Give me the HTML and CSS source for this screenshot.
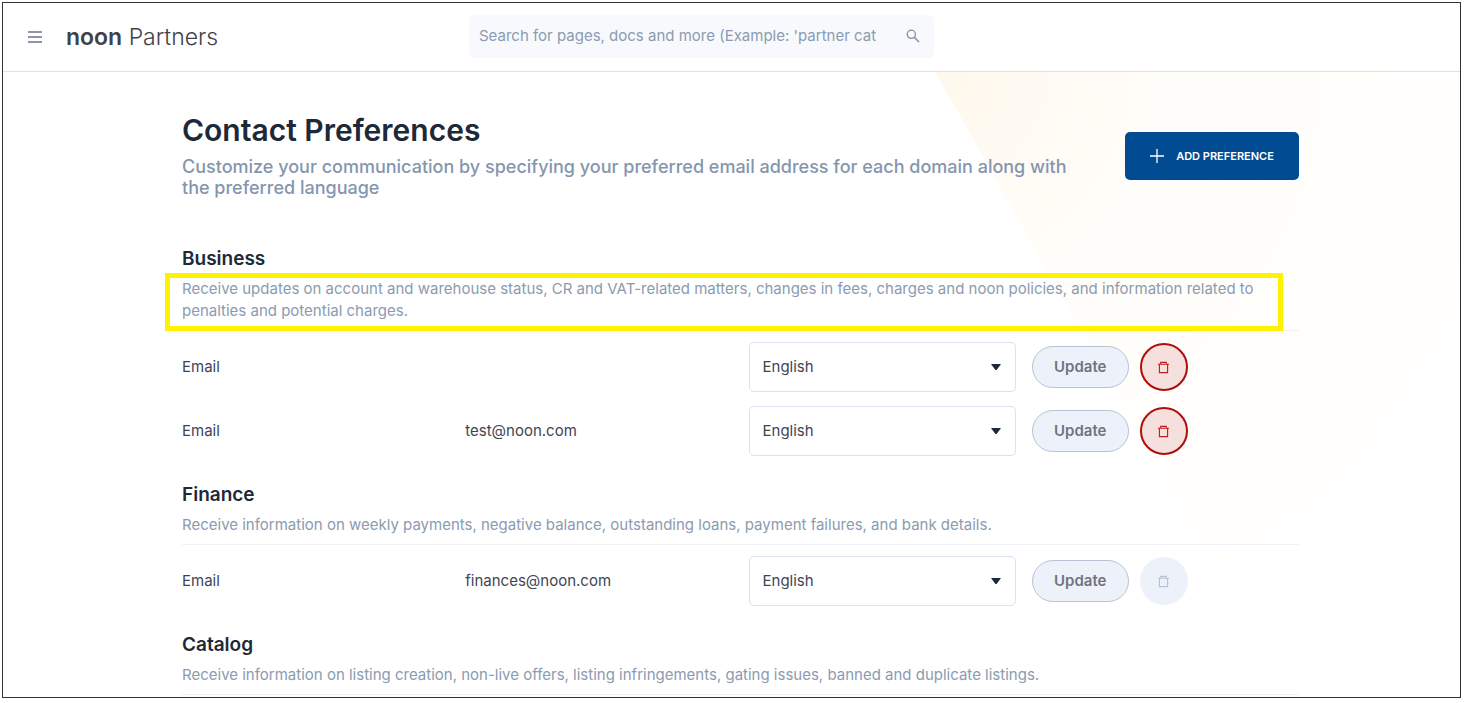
FILE: index.html
```html
<!DOCTYPE html>
<html lang="en">
<head>
<meta charset="utf-8">
<meta name="viewport" content="width=device-width, initial-scale=1">
<title>Contact Preferences</title>
<link rel="stylesheet" href="styles.css">
</head>
<body>
<svg class="sprite" aria-hidden="true">
  <symbol id="trash" viewBox="0 0 14 14"><path d="M1 3.5h12M4 3V1.5h6V3M2.6 4v8.5h8.8V4" fill="none" stroke="currentColor" stroke-width="1.2"/></symbol>
  <symbol id="caret" viewBox="0 0 10 6"><path d="M0 0h10L6 5.4Q5 6.4 4 5.4z" fill="currentColor"/></symbol>
</svg>
<div class="frame">
  <header class="topbar">
    <button class="menu" type="button" aria-label="Menu">
      <svg width="14" height="12" viewBox="0 0 14 12" aria-hidden="true"><path d="M0 1h14M0 6h14M0 11h14" stroke="currentColor" stroke-width="1.6"/></svg>
    </button>
    <a class="brand" href="#"><strong>noon</strong> Partners</a>
    <form class="search" role="search">
      <input class="search-input" type="text" aria-label="Search" placeholder="Search for pages, docs and more (Example: 'partner catalog')">
      <button class="search-button" type="button" aria-label="Search">
        <svg width="14" height="14" viewBox="0 0 14 14" aria-hidden="true"><g fill="none" stroke="currentColor"><circle cx="5.3" cy="5.3" r="4.1" stroke-width="1.3"/><path d="M8.3 8.3l4.7 4.7" stroke-width="1.6"/></g></svg>
      </button>
    </form>
  </header>
  <main class="page">
    <div class="intro">
      <div class="intro-text">
        <h1 class="title">Contact Preferences</h1>
        <p class="subtitle">Customize your communication by specifying your preferred email address for each domain along with the preferred language</p>
      </div>
      <button class="add" type="button">
        <svg width="14" height="14" viewBox="0 0 14 14" aria-hidden="true"><path d="M7 0v14M0 7h14" stroke="currentColor" stroke-width="1.3"/></svg>
        ADD PREFERENCE
      </button>
    </div>

    <section class="group">
      <h2 class="group-title">Business</h2>
      <p class="group-text highlighted">Receive updates on account and warehouse status, CR and VAT-related matters, changes in fees, charges and noon policies, and information related to penalties and potential charges.</p>
      <div class="rows">
        <div class="row">
          <label for="lang-1">Email</label>
          <span></span>
          <div class="select"><select id="lang-1"><option>English</option></select><svg class="caret" aria-hidden="true"><use href="#caret"/></svg></div>
          <div class="actions">
            <button class="update" type="button">Update</button>
            <button class="delete" type="button" aria-label="Delete"><svg class="trash" aria-hidden="true"><use href="#trash"/></svg></button>
          </div>
        </div>
        <div class="row">
          <label for="lang-2">Email</label>
          <span>test@noon.com</span>
          <div class="select"><select id="lang-2"><option>English</option></select><svg class="caret" aria-hidden="true"><use href="#caret"/></svg></div>
          <div class="actions">
            <button class="update" type="button">Update</button>
            <button class="delete" type="button" aria-label="Delete"><svg class="trash" aria-hidden="true"><use href="#trash"/></svg></button>
          </div>
        </div>
      </div>
    </section>

    <section class="group">
      <h2 class="group-title">Finance</h2>
      <p class="group-text">Receive information on weekly payments, negative balance, outstanding loans, payment failures, and bank details.</p>
      <div class="rows">
        <div class="row">
          <label for="lang-3">Email</label>
          <span>finances@noon.com</span>
          <div class="select"><select id="lang-3"><option>English</option></select><svg class="caret" aria-hidden="true"><use href="#caret"/></svg></div>
          <div class="actions">
            <button class="update" type="button">Update</button>
            <button class="delete" type="button" aria-label="Delete" disabled><svg class="trash" aria-hidden="true"><use href="#trash"/></svg></button>
          </div>
        </div>
      </div>
    </section>

    <section class="group">
      <h2 class="group-title">Catalog</h2>
      <p class="group-text">Receive information on listing creation, non-live offers, listing infringements, gating issues, banned and duplicate listings.</p>
    </section>
  </main>
</div>
</body>
</html>
```
FILE: styles.css
```css
* { box-sizing: border-box; }

body {
  margin: 0;
  padding: 2px 4px 5px 2px;
  background: #fff;
  color: #404553;
  font: 15px/22px Inter, "Open Sans", sans-serif;
}

h1, h2, p { margin: 0; }
button, input, select { font: inherit; }
button { padding: 0; border: 0; background: none; }
svg { display: block; }
.sprite { position: absolute; width: 0; height: 0; }

.frame {
  display: flex;
  flex-direction: column;
  height: calc(100vh - 7px);
  overflow: hidden;
  border: 1px solid #333;
}

.topbar {
  display: flex;
  flex: none;
  align-items: center;
  height: 69px;
  padding: 0 25px;
  border-bottom: 1px solid #dae2ec;
}
.menu { color: #6b7389; }
.brand {
  width: 379px;
  margin-left: 24px;
  color: #404248;
  font-size: 23px;
  font-weight: 300;
  text-decoration: none;
}
.brand strong { font-weight: 600; }

.search {
  display: flex;
  align-items: center;
  width: 465px;
  height: 43px;
  margin: 0 0 2px 24px;
  padding: 0 14px 0 10px;
  gap: 30px;
  border-radius: 5px;
  background: #f7f9fd;
}
.search-input {
  flex: 1;
  min-width: 0;
  padding: 0;
  border: 0;
  outline: 0;
  background: none;
}
.search-input::placeholder { color: #8b9bb0; }
.search-button { color: #8490a5; }

.page {
  position: relative;
  flex: 1;
  padding: 41px 161px 0 179px;
}
.page::before {
  content: "";
  position: absolute;
  z-index: -1;
  inset: 0 0 0 64%;
  background: radial-gradient(circle at 0 0, #fff8eb 0, #fffbf4 110px, #fffdf9 220px, #fffefb 400px, #fffefd 520px, #fff 640px);
  clip-path: polygon(0 0, 100% 0, 100% 100%, 67% 100%);
}

.intro {
  display: flex;
  align-items: center;
  justify-content: space-between;
  gap: 48px;
}
.intro-text { flex: 1; }
.title {
  color: #1d2939;
  font-size: 30px;
  font-weight: 600;
  line-height: 34px;
}
.subtitle {
  margin-top: 9px;
  color: #8496ae;
  font-size: 18px;
  font-weight: 500;
  line-height: 21px;
}
.add {
  display: flex;
  flex: none;
  align-items: center;
  justify-content: center;
  gap: 12px;
  width: 174px;
  height: 48px;
  border-radius: 5px;
  background: #004b91;
  color: #fff;
  font-size: 11px;
  font-weight: 600;
}

.group { margin-top: 25px; }
.intro + .group { margin-top: 47px; }
.group-title {
  color: #1d2939;
  font-size: 19px;
  font-weight: 600;
  line-height: 28px;
}
.group-text {
  padding: 5px 0 8px;
  border-bottom: 1px solid #edf2f9;
  color: #8b9bb0;
}
.highlighted { position: relative; }
.highlighted::after {
  content: "";
  position: absolute;
  inset: 0 16px -1px -17px;
  border: 5px solid #fff200;
}

.rows {
  display: grid;
  gap: 14px;
  margin-top: 11px;
}
.row {
  display: grid;
  grid-template-columns: repeat(4, 1fr);
  align-items: center;
  column-gap: 16px;
}
.select { position: relative; }
.select select {
  display: block;
  width: 100%;
  height: 50px;
  padding: 0 13px;
  appearance: none;
  border: 1px solid #dae1ef;
  border-radius: 5px;
  background: #fff;
  color: #404553;
}
.caret {
  position: absolute;
  top: 22px;
  right: 15px;
  width: 10px;
  height: 6px;
  color: #1d2939;
  pointer-events: none;
}

.actions {
  display: flex;
  align-items: center;
  gap: 11px;
}
.update {
  width: 97px;
  height: 42px;
  border: 1px solid #b9c3d8;
  border-radius: 21px;
  background: #edf2fa;
  color: #6f7480;
  font-weight: 600;
}
.delete {
  display: grid;
  place-items: center;
  width: 48px;
  height: 48px;
  border: 2px solid #b00c0c;
  border-radius: 50%;
  background: #f5e0de;
  color: #bd2020;
}
.delete:disabled {
  border-color: #edf2fa;
  background: #edf2fa;
  color: #b8c2d6;
}
.trash {
  width: 13px;
  height: 13px;
}
```
